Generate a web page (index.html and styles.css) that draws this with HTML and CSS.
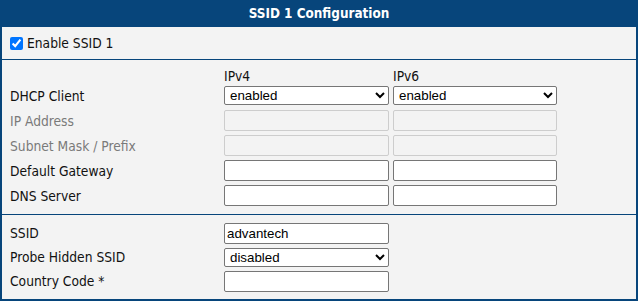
FILE: index.html
```html
<!DOCTYPE html>
<html lang="en">
<head>
  <meta charset="UTF-8">
  <title>SSID 1 Configuration</title>
  <link rel="stylesheet" href="styles.css">
</head>
<body>
  <div class="panel">
    <div class="panel-title">SSID 1 Configuration</div>

    <div class="section section-enable">
      <label class="check"><input type="checkbox" checked> Enable SSID 1</label>
    </div>

    <div class="section section-ip">
      <div class="row row-head">
        <span class="label"></span>
        <span class="col-head">IPv4</span>
        <span class="col-head">IPv6</span>
      </div>
      <div class="row">
        <span class="label">DHCP Client</span>
        <select><option>enabled</option><option>disabled</option></select>
        <select><option>enabled</option><option>disabled</option></select>
      </div>
      <div class="row">
        <span class="label disabled">IP Address</span>
        <input type="text" disabled>
        <input type="text" disabled>
      </div>
      <div class="row">
        <span class="label disabled">Subnet Mask / Prefix</span>
        <input type="text" disabled>
        <input type="text" disabled>
      </div>
      <div class="row">
        <span class="label">Default Gateway</span>
        <input type="text">
        <input type="text">
      </div>
      <div class="row">
        <span class="label">DNS Server</span>
        <input type="text">
        <input type="text">
      </div>
    </div>

    <div class="section section-wifi">
      <div class="row">
        <span class="label">SSID</span>
        <input type="text" value="advantech">
      </div>
      <div class="row">
        <span class="label">Probe Hidden SSID</span>
        <select><option>disabled</option><option>enabled</option></select>
      </div>
      <div class="row">
        <span class="label">Country Code *</span>
        <input type="text">
      </div>
    </div>
  </div>
</body>
</html>
```

FILE: styles.css
```css
body {
  margin: 0;
  font-family: "DejaVu Sans Condensed", "DejaVu Sans", sans-serif;
  font-size: 13.7px;
  color: #111;
}

.panel {
  width: 638px;
  height: 301px;
  box-sizing: border-box;
  background-color: #f3f3f3;
  border: 2px solid #07457b;
  border-top: none;
}

.panel-title {
  height: 27px;
  margin: 0 -2px;
  background-color: #07457b;
  color: #fff;
  font-weight: bold;
  font-size: 13.4px;
  text-align: center;
  line-height: 28px;
}

.section {
  padding: 0 8px;
  border-bottom: 1px solid #07457b;
}

.section:last-child {
  border-bottom: none;
}

.section-enable {
  height: 32px;
  display: flex;
  align-items: center;
}

.check {
  display: flex;
  align-items: center;
  gap: 4px;
}

.check input {
  margin: 0;
  width: 13px;
  height: 13px;
  accent-color: #0075ff;
}

.section-ip {
  padding-top: 8px;
  padding-bottom: 6px;
}

.section-wifi {
  padding-top: 6px;
  padding-bottom: 6px;
}

.row {
  display: grid;
  grid-template-columns: 210px 165px 164px;
  column-gap: 4px;
  align-items: center;
  height: 25px;
}

.section-wifi .row {
  height: 24px;
}

.row-head {
  height: 15px;
}

.label {
  white-space: nowrap;
}

.label.disabled {
  color: #7a7a7a;
}

select,
input[type="text"] {
  box-sizing: border-box;
  margin: 0;
  font-family: "Liberation Sans", Arial, sans-serif;
  font-size: 13.33px;
  color: #000;
  background-color: #fff;
  border: 1px solid #767676;
  border-radius: 2px;
}

select {
  height: 19px;
  padding: 0 0 0 1px;
}

input[type="text"] {
  height: 21px;
  padding: 1px 2px;
}

input[type="text"]:disabled {
  background-color: #f3f3f3;
  border-color: #cdcdcd;
}
```
